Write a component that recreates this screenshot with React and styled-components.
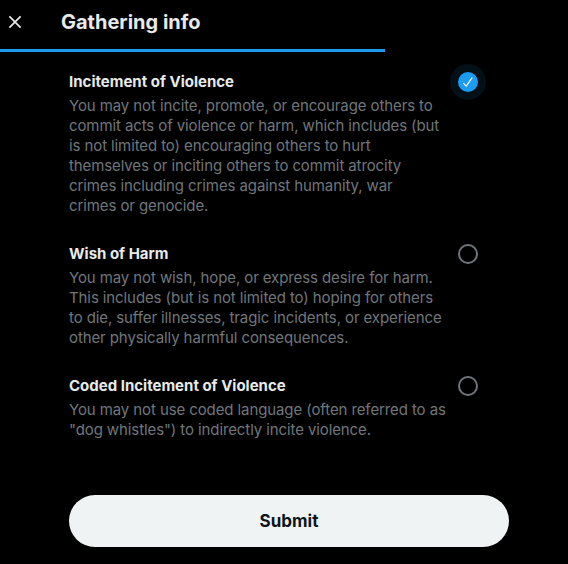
import React, { useState } from 'react';
import styled, { createGlobalStyle } from 'styled-components';

const GlobalStyle = createGlobalStyle`
  html, body {
    margin: 0;
    padding: 0;
    background: #000;
  }
  body {
    font-family: "Segoe UI", Inter, "Liberation Sans", sans-serif;
    -webkit-font-smoothing: antialiased;
  }
`;

const Page = styled.div`
  width: 568px;
  height: 564px;
  background: #000;
  overflow: hidden;
  display: flex;
  flex-direction: column;
`;

const Header = styled.div`
  display: flex;
  align-items: center;
  height: 49px;
`;

const CloseButton = styled.button`
  width: 20px;
  height: 20px;
  margin: 0 0 5px 5px;
  padding: 0;
  border: none;
  background: transparent;
  color: #e7e9ea;
  display: flex;
  align-items: center;
  justify-content: center;
  cursor: pointer;
  svg {
    width: 20px;
    height: 20px;
    fill: currentColor;
  }
`;

const Title = styled.h2`
  margin: 0 0 6px 36px;
  font-size: 20px;
  font-weight: 700;
  line-height: 24px;
  color: #e7e9ea;
`;

const Progress = styled.div`
  height: 3px;
  background: transparent;
`;

const ProgressFill = styled.div`
  height: 100%;
  background: #1d9bf0;
`;

const Options = styled.div`
  display: flex;
  flex-direction: column;
  gap: 28px;
  padding: 20px 82px 0 69px;
`;

const Option = styled.label`
  display: flex;
  align-items: flex-start;
  cursor: pointer;
`;

const OptionText = styled.div`
  flex: 1;
  padding-right: 3px;
`;

const OptionTitle = styled.div`
  font-size: 15px;
  font-weight: 700;
  line-height: 20px;
  color: #e7e9ea;
`;

const OptionDesc = styled.div`
  margin-top: 4px;
  font-size: 15px;
  line-height: 20px;
  letter-spacing: -0.1px;
  color: #71767b;
`;

const RadioWrap = styled.div`
  width: 36px;
  height: 36px;
  margin-top: -8px;
  border-radius: 50%;
  background: ${(p) => (p.$checked ? 'rgba(29, 155, 240, 0.1)' : 'transparent')};
  display: flex;
  align-items: center;
  justify-content: center;
  flex-shrink: 0;
`;

const Radio = styled.div`
  width: 20px;
  height: 20px;
  box-sizing: border-box;
  border-radius: 50%;
  border: ${(p) => (p.$checked ? 'none' : '2px solid #6e767d')};
  background: ${(p) => (p.$checked ? '#1d9bf0' : 'transparent')};
  display: flex;
  align-items: center;
  justify-content: center;
  svg {
    width: 14px;
    height: 14px;
    fill: #fff;
  }
`;

const Footer = styled.div`
  margin-top: auto;
  padding: 0 59px 17px 69px;
`;

const SubmitButton = styled.button`
  width: 100%;
  height: 52px;
  border: none;
  border-radius: 26px;
  background: #eff3f4;
  color: #0f1419;
  font-family: inherit;
  font-size: 17px;
  font-weight: 700;
  cursor: pointer;
`;

const options = [
  {
    id: 'violence',
    title: 'Incitement of Violence',
    desc: 'You may not incite, promote, or encourage others to commit acts of violence or harm, which includes (but is not limited to) encouraging others to hurt themselves or inciting others to commit atrocity crimes including crimes against humanity, war crimes\u00a0or genocide.',
  },
  {
    id: 'harm',
    title: 'Wish of Harm',
    desc: 'You may not wish, hope, or express desire for harm. This includes (but is not limited to) hoping for others to die, suffer illnesses, tragic incidents, or experience other physically harmful consequences.',
  },
  {
    id: 'coded',
    title: 'Coded Incitement of Violence',
    desc: 'You may not use coded language (often referred to as "dog whistles") to indirectly incite violence.',
  },
];

const App = () => {
  const [selected, setSelected] = useState('violence');

  return (
    <Page>
      <GlobalStyle />
      <Header>
        <CloseButton aria-label="Close">
          <svg viewBox="0 0 24 24">
            <path d="M10.59 12L4.54 5.96l1.42-1.42L12 10.59l6.04-6.05 1.42 1.42L13.41 12l6.05 6.04-1.42 1.42L12 13.41l-6.04 6.05-1.42-1.42L10.59 12z" />
          </svg>
        </CloseButton>
        <Title>Gathering info</Title>
      </Header>
      <Progress>
        <ProgressFill style={{ width: '385px' }} />
      </Progress>

      <Options>
        {options.map((o) => {
          const checked = selected === o.id;
          return (
            <Option key={o.id} onClick={() => setSelected(o.id)}>
              <OptionText>
                <OptionTitle>{o.title}</OptionTitle>
                <OptionDesc>{o.desc}</OptionDesc>
              </OptionText>
              <RadioWrap $checked={checked}>
                <Radio $checked={checked}>
                  {checked && (
                    <svg viewBox="0 0 24 24">
                      <path d="M9 20c-.264 0-.52-.104-.707-.293l-4.785-4.785c-.39-.39-.39-1.023 0-1.414s1.023-.39 1.414 0l3.946 3.945L18.075 4.41c.32-.45.94-.558 1.395-.24.45.318.56.942.24 1.394L9.817 19.577c-.17.24-.438.395-.732.42-.028.002-.057.003-.085.003z" />
                    </svg>
                  )}
                </Radio>
              </RadioWrap>
            </Option>
          );
        })}
      </Options>

      <Footer>
        <SubmitButton>Submit</SubmitButton>
      </Footer>
    </Page>
  );
};

export default App;
